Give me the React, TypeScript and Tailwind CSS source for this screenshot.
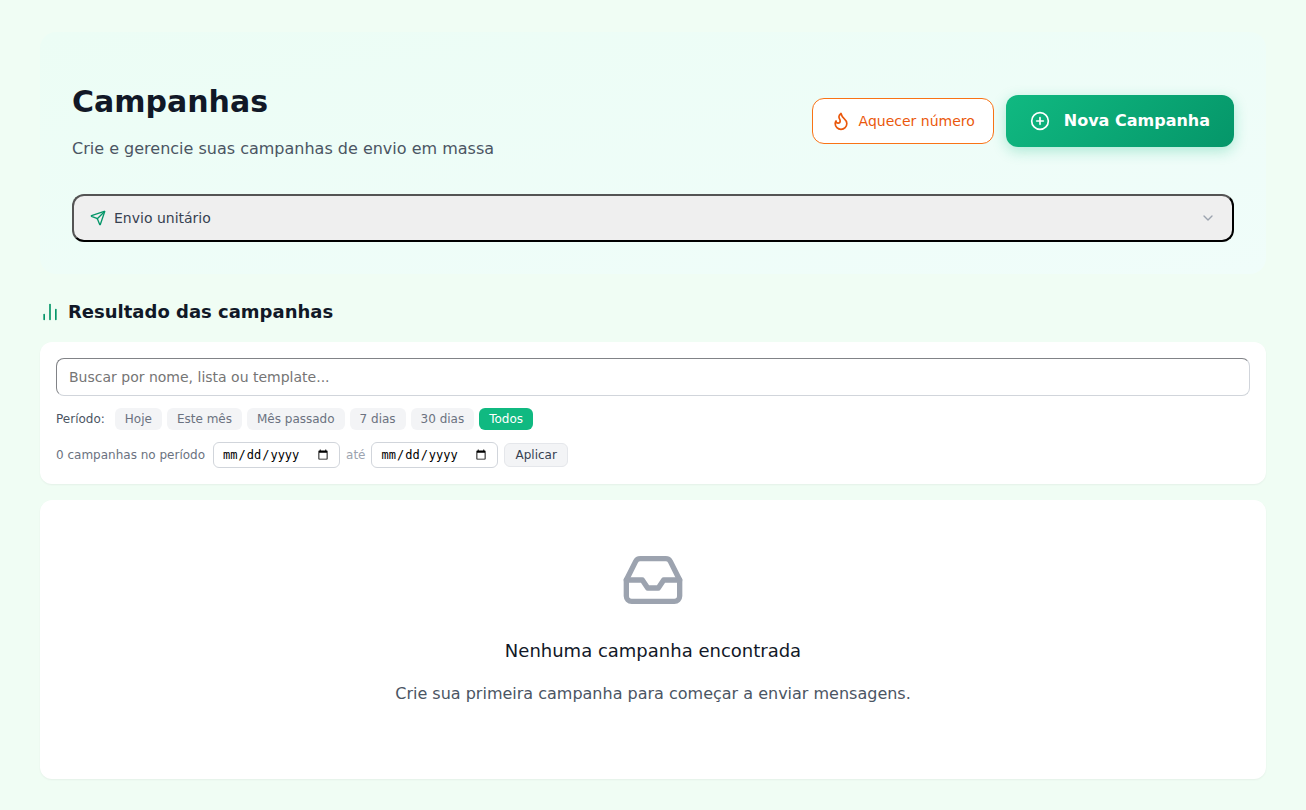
import { useState, type FormEvent } from "react";
import {
  ChartNoAxesColumn,
  ChevronDown,
  CirclePlus,
  Flame,
  Inbox,
  Send,
} from "lucide-react";
import { clsx } from "clsx";

const PERIODS = ["Hoje", "Este mês", "Mês passado", "7 dias", "30 dias", "Todos"];

const dateInputClass =
  "h-[26px] rounded-md border border-[#d1d5db] px-2 font-['DejaVu_Sans_Mono',monospace] text-black";

function PageHeader() {
  return (
    <header className="rounded-2xl bg-linear-to-br from-[#ecfdf5] to-[#f0fdfa] px-8 pt-12 pb-8">
      <div className="mb-8 flex items-center justify-between gap-4">
        <div>
          <h1 className="mb-3 text-[30px] leading-11 font-bold text-[#111827]">
            Campanhas
          </h1>
          <p className="text-base leading-[26px] text-[#4b5563]">
            Crie e gerencie suas campanhas de envio em massa
          </p>
        </div>
        <div className="flex items-center gap-3">
          <button
            type="button"
            className="flex items-center gap-2 rounded-xl border border-[#f97316] bg-white px-[18px] py-3 text-sm text-[#ea580c]"
          >
            <Flame size={20} />
            Aquecer número
          </button>
          <button
            type="button"
            className="flex items-center gap-3.5 rounded-xl bg-[linear-gradient(135deg,#10b981_0%,#059669_100%)] px-6 py-3.5 text-base font-semibold text-white shadow-[0_4px_14px_rgba(16,185,129,0.3)]"
          >
            <CirclePlus size={20} />
            Nova Campanha
          </button>
        </div>
      </div>
      <button
        type="button"
        className="flex h-12 w-full items-center gap-2 rounded-xl border-2 border-black bg-[#efefef] px-4 text-sm text-[#374151] [border-style:outset]"
      >
        <Send size={16} className="text-[#059669]" />
        Envio unitário
        <ChevronDown size={16} className="ml-auto text-[#9ca3af]" />
      </button>
    </header>
  );
}

function Filters() {
  const [period, setPeriod] = useState("Todos");

  return (
    <form
      onSubmit={(e: FormEvent) => e.preventDefault()}
      className="rounded-xl bg-white p-4 text-xs shadow-xs"
    >
      <input
        type="text"
        aria-label="Buscar campanhas"
        placeholder="Buscar por nome, lista ou template..."
        className="mb-3 block h-[38px] w-full rounded-lg border border-[#d1d5db] px-3 text-sm [border-style:inset] placeholder:text-[#757575]"
      />
      <div className="mb-3 flex flex-wrap items-center gap-[5px]">
        <span className="mr-[5px] text-[#4b5563]">Período:</span>
        {PERIODS.map((item) => (
          <button
            key={item}
            type="button"
            onClick={() => setPeriod(item)}
            className={clsx(
              "rounded-md px-2.5 py-[3px]",
              item === period
                ? "bg-[#10b981] text-white"
                : "bg-[#f3f4f6] text-[#6b7280]"
            )}
          >
            {item}
          </button>
        ))}
      </div>
      <div className="flex flex-wrap items-center gap-1.5">
        <span className="mr-0.5 text-[#6b7280]">0 campanhas no período</span>
        <input type="date" aria-label="Data inicial" className={dateInputClass} />
        <span className="text-[#9ca3af]">até</span>
        <input type="date" aria-label="Data final" className={dateInputClass} />
        <button
          type="submit"
          className="rounded-md border border-[#e5e7eb] bg-[#f3f4f6] px-2.5 py-[3px] text-[#374151]"
        >
          Aplicar
        </button>
      </div>
    </form>
  );
}

function EmptyState() {
  return (
    <section className="flex flex-col items-center rounded-xl bg-white px-8 pt-12 pb-[71px] text-center shadow-xs">
      <Inbox size={64} className="mb-6 text-[#9ca3af]" />
      <h3 className="mb-3.5 text-lg leading-[30px] text-[#111827]">
        Nenhuma campanha encontrada
      </h3>
      <p className="text-base leading-7 text-[#4b5563]">
        Crie sua primeira campanha para começar a enviar mensagens.
      </p>
    </section>
  );
}

export default function App() {
  return (
    <main className="min-h-screen bg-[#f0fdf4] px-10 py-8 font-['DejaVu_Sans',sans-serif]">
      <PageHeader />
      <h2 className="mt-6 mb-4 flex items-center gap-2 text-lg leading-7 font-semibold text-[#111827]">
        <ChartNoAxesColumn size={20} className="text-[#059669]" />
        Resultado das campanhas
      </h2>
      <div className="flex flex-col gap-4">
        <Filters />
        <EmptyState />
      </div>
    </main>
  );
}
